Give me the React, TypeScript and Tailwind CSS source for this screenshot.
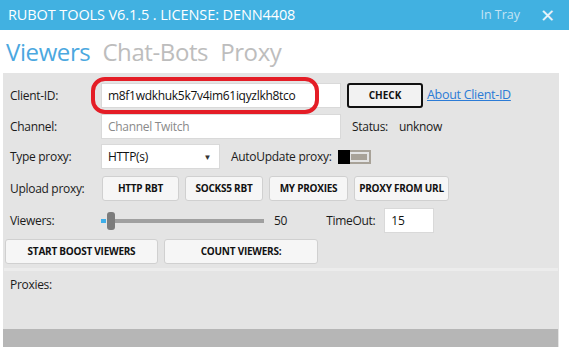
import React from 'react';

const font = { fontFamily: '"Open Sans", "Noto Sans", sans-serif' };

const RowLabel = ({ children }: { children: React.ReactNode }) => (
    <div className="w-[91px] shrink-0 text-[12px] tracking-[-0.3px] text-[#1b1b1b]">{children}</div>
);

const Btn = ({ children, className = '' }: { children: React.ReactNode; className?: string }) => (
    <button
        className={`h-[25px] rounded-[3px] border border-[#d0d0d0] bg-[#f6f6f6] text-[10px] font-bold tracking-tight text-[#111] ${className}`}
    >
        {children}
    </button>
);

export default function App() {
    return (
        <div className="h-[350px] w-[569px] overflow-hidden bg-white" style={font}>
            {/* Title bar */}
            <div className="flex h-[30px] items-center bg-[#41b1e1] pl-[8px] pr-[14px] text-white">
                <span className="text-[14.5px] tracking-[-0.1px]">RUBOT TOOLS V6.1.5 . LICENSE: DENN4408</span>
                <span className="ml-auto text-[12.5px] text-[#c4e4f4]">In Tray</span>
                <span className="ml-[20px] text-[18px] leading-none text-[#e6f4fb]">✕</span>
            </div>

            {/* Tabs */}
            <div className="flex h-[43px] items-center gap-[12px] pl-[6px] pt-[1px] text-[24px] tracking-[-0.4px]">
                <span className="text-[#4ba8df]">Viewers</span>
                <span className="text-[#bdbdbd]">Chat-Bots</span>
                <span className="text-[#bdbdbd]">Proxy</span>
            </div>

            {/* Panel */}
            <div className="relative ml-[3px] flex h-[274px] w-[556px] flex-col bg-[#e4e4e4]">
                <div className="flex flex-col pl-[7px] pt-[10px] text-[12px] tracking-[-0.3px]">
                    {/* Client-ID */}
                    <div className="flex h-[25px] items-center">
                        <RowLabel>Client-ID:</RowLabel>
                        <div className="flex h-[25px] w-[240px] items-center border border-[#d9d9d9] bg-white pl-[6px] text-[#111]">
                            m8f1wdkhuk5k7v4im61iqyzlkh8tco
                        </div>
                        <button className="ml-[6px] h-[25px] w-[76px] rounded-[3px] border-2 border-[#111] bg-[#f2f2f2] text-[10px] font-bold tracking-normal text-[#111]">
                            CHECK
                        </button>
                        <a className="ml-[4px] text-[12.5px] text-[#2b7bd6] underline">About Client-ID</a>
                    </div>

                    {/* Channel */}
                    <div className="mt-[6px] flex h-[25px] items-center">
                        <RowLabel>Channel:</RowLabel>
                        <div className="flex h-[25px] w-[240px] items-center border border-[#d9d9d9] bg-white pl-[6px] text-[#8a8a8a]">
                            Channel Twitch
                        </div>
                        <span className="ml-[11px] text-[#1b1b1b]">Status:</span>
                        <span className="ml-[11px] text-[#1b1b1b]">unknow</span>
                    </div>

                    {/* Type proxy */}
                    <div className="mt-[5px] flex h-[25px] items-center">
                        <RowLabel>Type proxy:</RowLabel>
                        <div className="flex h-[25px] w-[119px] items-center border border-[#d9d9d9] bg-white pl-[6px] text-[#111]">
                            HTTP(s)
                            <span className="ml-auto mr-[8px] text-[8px] text-[#333]">▼</span>
                        </div>
                        <span className="ml-[11px] text-[#1b1b1b]">AutoUpdate proxy:</span>
                        <div className="ml-[6px] flex h-[14px] w-[33px] items-center border-2 border-[#a8a298] bg-[#e4e4e4]">
                            <div className="h-[14px] w-[12px] -ml-[2px] bg-black" />
                            <div className="ml-[1px] h-[6px] w-[16px] bg-[#a8a298]" />
                        </div>
                    </div>

                    {/* Upload proxy */}
                    <div className="mt-[7px] flex h-[25px] items-center">
                        <RowLabel>Upload proxy:</RowLabel>
                        <div className="flex gap-[6px] pl-[1px]">
                            <Btn className="w-[77px]">HTTP RBT</Btn>
                            <Btn className="w-[78px]">SOCKS5 RBT</Btn>
                            <Btn className="w-[79px]">MY PROXIES</Btn>
                            <Btn className="w-[95px]">PROXY FROM URL</Btn>
                        </div>
                    </div>

                    {/* Viewers */}
                    <div className="mt-[7px] flex h-[25px] items-center">
                        <RowLabel>Viewers:</RowLabel>
                        <div className="relative flex h-[18px] w-[163px] items-center">
                            <div className="h-[4px] w-[5px] bg-[#3daee9]" />
                            <div className="ml-[9px] h-[4px] w-[149px] bg-[#a0a0a0]" />
                            <div className="absolute left-[6px] top-0 h-[18px] w-[8px] rounded-[3px] bg-[#7c7c7c]" />
                        </div>
                        <span className="ml-[10px] text-[#1b1b1b]">50</span>
                        <span className="ml-[39px] text-[#1b1b1b]">TimeOut:</span>
                        <div className="ml-[9px] flex h-[25px] w-[50px] items-center border border-[#d9d9d9] bg-white pl-[6px] text-[#111]">
                            15
                        </div>
                    </div>

                    {/* Action buttons */}
                    <div className="mt-[6px] flex gap-[6px] -ml-[5px]">
                        <Btn className="w-[153px]">START BOOST VIEWERS</Btn>
                        <Btn className="w-[154px]">COUNT VIEWERS:</Btn>
                    </div>
                </div>

                {/* Divider */}
                <div className="mx-[1px] mt-[4px] h-[3px] bg-[#ececec]" />

                <div className="pl-[7px] pt-[5px] text-[12px] tracking-[-0.3px] text-[#1b1b1b]">Proxies:</div>

                <div className="mt-auto mr-[1px] h-[18px] bg-[#b6b6b6]" />

                {/* Red annotation marking the client id */}
                <div className="pointer-events-none absolute left-[88px] top-[4px] h-[37px] w-[228px] rounded-[14px] border-[4px] border-[#e41d26]" />
            </div>
        </div>
    );
}
